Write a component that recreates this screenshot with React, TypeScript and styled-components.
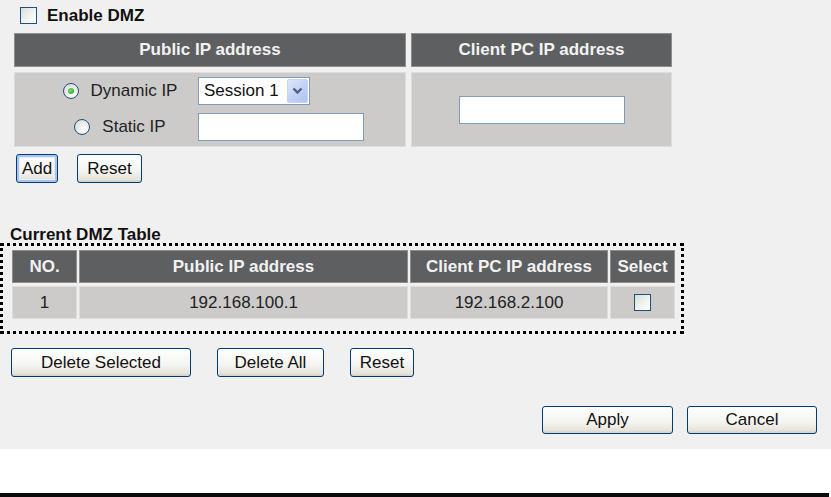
import React from "react";
import styled, { createGlobalStyle, css } from "styled-components";

const GlobalStyle = createGlobalStyle`
  body {
    margin: 0;
    background: #ffffff;
    font-family: "Liberation Sans", Arial, sans-serif;
  }
`;

const Page = styled.div`
  width: 831px;
`;

const Panel = styled.div`
  height: 449px;
  box-sizing: border-box;
  padding-top: 7px;
  background-color: #f0f0f0;
`;

const EnableRow = styled.label`
  display: flex;
  align-items: center;
  gap: 10px;
  height: 17px;
  padding-left: 20px;
  margin-bottom: 9px;
  font-size: 17px;
  font-weight: bold;
  color: #111;
`;

const Check = styled.span`
  display: inline-block;
  width: 17px;
  height: 17px;
  box-sizing: border-box;
  border: 1px solid #1c5180;
  background: linear-gradient(135deg, #dcdcd7 0%, #f4f4f0 60%, #ffffff 100%);
`;

const EntryGrid = styled.div`
  display: grid;
  grid-template-columns: 392px 261px;
  grid-template-rows: 34px 75px;
  gap: 5px;
  margin-left: 14px;
`;

const HeadCell = styled.div`
  display: flex;
  align-items: center;
  justify-content: center;
  box-sizing: border-box;
  border: 1px solid #8e8e8e;
  background-color: #5e5f61;
  color: #f2f2f2;
  font-size: 17px;
  font-weight: bold;
`;

const BodyCell = styled.div<{ $center?: boolean }>`
  box-sizing: border-box;
  border: 1px solid #dddddd;
  background-color: #cccbca;
  color: #222;
  font-size: 17px;
  ${(p) =>
    p.$center &&
    css`
      display: flex;
      align-items: center;
      justify-content: center;
    `}
`;

const RadioGrid = styled.div`
  display: grid;
  grid-template-columns: 140px auto;
  grid-auto-rows: 28px;
  column-gap: 8px;
  row-gap: 8px;
  align-items: center;
  padding: 4px 0 0 35px;
`;

const RadioLabel = styled.label`
  display: flex;
  align-items: center;
  justify-content: center;
  gap: 12px;
  font-size: 17px;
  color: #222;
`;

const Radio = styled.span<{ $on?: boolean }>`
  position: relative;
  display: inline-block;
  width: 16px;
  height: 16px;
  box-sizing: border-box;
  border: 1px solid #1c5180;
  border-radius: 50%;
  background: radial-gradient(circle at 65% 65%, #ffffff 0%, #e6e6e0 60%, #d4d4cc 100%);
  ${(p) =>
    p.$on &&
    css`
      &::after {
        content: "";
        position: absolute;
        left: 4px;
        top: 4px;
        width: 6px;
        height: 6px;
        border-radius: 50%;
        background: radial-gradient(circle at 40% 40%, #6fdc6f, #21a121);
      }
    `}
`;

const Select = styled.div`
  display: flex;
  align-items: center;
  justify-content: space-between;
  width: 112px;
  height: 28px;
  box-sizing: border-box;
  padding: 1px 1px 1px 5px;
  border: 1px solid #7f9db9;
  background: #ffffff;
  font-size: 17px;
  color: #111;
`;

const DropButton = styled.span`
  display: flex;
  align-items: center;
  justify-content: center;
  width: 21px;
  height: 100%;
  box-sizing: border-box;
  border: 1px solid #c3d3fd;
  border-radius: 2px;
  background: linear-gradient(135deg, #dde6fb 0%, #c1d0f5 55%, #b1c3f0 100%);
`;

const TextBox = styled.span<{ $w: number }>`
  display: inline-block;
  width: ${(p) => p.$w}px;
  height: 28px;
  box-sizing: border-box;
  border: 1px solid #7f9db9;
  background: #ffffff;
`;

const ButtonRow = styled.div<{ $top: number; $left?: number; $gap: number; $end?: boolean }>`
  display: flex;
  gap: ${(p) => p.$gap}px;
  margin-top: ${(p) => p.$top}px;
  padding-left: ${(p) => p.$left ?? 0}px;
  padding-right: ${(p) => (p.$end ? 14 : 0)}px;
  justify-content: ${(p) => (p.$end ? "flex-end" : "flex-start")};
`;

const Button = styled.button<{ $w: number; $h?: number; $focus?: boolean }>`
  width: ${(p) => p.$w}px;
  height: ${(p) => p.$h ?? 29}px;
  padding: 0;
  box-sizing: border-box;
  border: 1px solid #003c74;
  border-radius: 3px;
  background: linear-gradient(#ffffff 0%, #f4f4f0 60%, #e6e3da 90%, #d6d0c5 100%);
  font-family: "Liberation Sans", Arial, sans-serif;
  font-size: 17px;
  color: #111;
  ${(p) =>
    p.$focus &&
    css`
      box-shadow: inset 0 0 0 2px #a9c4f0, inset 0 0 0 3px #e4ecfb;
    `}
`;

const SectionTitle = styled.div`
  margin-top: 43px;
  padding-left: 10px;
  height: 17px;
  line-height: 17px;
  font-size: 17px;
  font-weight: bold;
  color: #111;
`;

const DottedBox = styled.div`
  width: 684px;
  box-sizing: border-box;
  padding: 4px 6px 12px 9px;
  border: 3px dotted #000;
`;

const DmzTable = styled.div`
  display: grid;
  grid-template-columns: 65px 329px 198px 65px;
  grid-template-rows: 33px 33px;
  column-gap: 2px;
  row-gap: 3px;
`;

const Footer = styled.div`
  height: 4px;
  width: 829px;
  margin-top: 44px;
  background-color: #0a0a0a;
`;

export default function App() {
  type DmzEntry = {
    key: number;
    publicIp: string;
    clientIp: string;
  };

  const dmzData: DmzEntry[] = [
    { key: 1, publicIp: "192.168.100.1", clientIp: "192.168.2.100" },
  ];

  return (
    <Page>
      <GlobalStyle />
      <Panel>
        <EnableRow>
          <Check />
          Enable DMZ
        </EnableRow>
        <EntryGrid>
          <HeadCell>Public IP address</HeadCell>
          <HeadCell>Client PC IP address</HeadCell>
          <BodyCell>
            <RadioGrid>
              <RadioLabel>
                <Radio $on />
                Dynamic IP
              </RadioLabel>
              <Select>
                Session 1
                <DropButton>
                  <svg width="11" height="8" viewBox="0 0 11 8">
                    <polyline
                      points="1.5,1.5 5.5,5.5 9.5,1.5"
                      fill="none"
                      stroke="#4d6185"
                      strokeWidth="2.4"
                    />
                  </svg>
                </DropButton>
              </Select>
              <RadioLabel>
                <Radio />
                Static IP
              </RadioLabel>
              <TextBox $w={166} />
            </RadioGrid>
          </BodyCell>
          <BodyCell $center>
            <TextBox $w={166} />
          </BodyCell>
        </EntryGrid>
        <ButtonRow $top={7} $left={16} $gap={19}>
          <Button type="button" $w={42} $focus>
            Add
          </Button>
          <Button type="button" $w={65}>
            Reset
          </Button>
        </ButtonRow>
        <SectionTitle>Current DMZ Table</SectionTitle>
        <DottedBox>
          <DmzTable>
            <HeadCell>NO.</HeadCell>
            <HeadCell>Public IP address</HeadCell>
            <HeadCell>Client PC IP address</HeadCell>
            <HeadCell>Select</HeadCell>
            {dmzData.map((row) => (
              <React.Fragment key={row.key}>
                <BodyCell $center>{row.key}</BodyCell>
                <BodyCell $center>{row.publicIp}</BodyCell>
                <BodyCell $center>{row.clientIp}</BodyCell>
                <BodyCell $center>
                  <Check />
                </BodyCell>
              </React.Fragment>
            ))}
          </DmzTable>
        </DottedBox>
        <ButtonRow $top={14} $left={11} $gap={26}>
          <Button type="button" $w={180}>
            Delete Selected
          </Button>
          <Button type="button" $w={107}>
            Delete All
          </Button>
          <Button type="button" $w={64}>
            Reset
          </Button>
        </ButtonRow>
        <ButtonRow $top={29} $gap={14} $end>
          <Button type="button" $w={131} $h={28}>
            Apply
          </Button>
          <Button type="button" $w={130} $h={28}>
            Cancel
          </Button>
        </ButtonRow>
      </Panel>
      <Footer />
    </Page>
  );
}
